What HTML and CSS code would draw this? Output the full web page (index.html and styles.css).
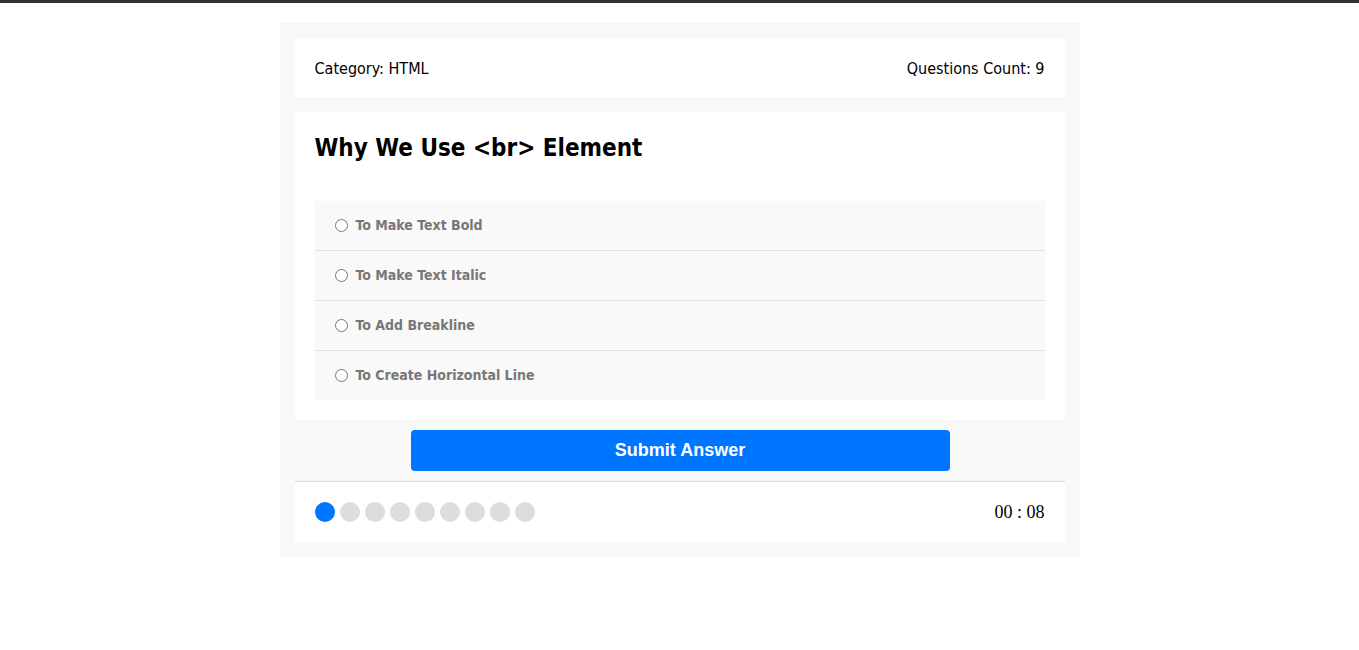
FILE: index.html
```html
<!DOCTYPE html>
<html>
<head>
<meta charset="utf-8">
<title>Quiz App</title>
<link rel="stylesheet" href="styles.css">
</head>
<body>
<div class="topbar"></div>
<div class="quiz-app">
  <div class="quiz-info">
    <div class="category">Category: <span>HTML</span></div>
    <div class="count">Questions Count: <span>9</span></div>
  </div>
  <div class="quiz-area">
    <h2>Why We Use &lt;br&gt; Element</h2>
    <div class="answers-area">
      <div class="answer"><input type="radio" name="q" id="a1"><label for="a1">To Make Text Bold</label></div>
      <div class="answer"><input type="radio" name="q" id="a2"><label for="a2">To Make Text Italic</label></div>
      <div class="answer"><input type="radio" name="q" id="a3"><label for="a3">To Add Breakline</label></div>
      <div class="answer"><input type="radio" name="q" id="a4"><label for="a4">To Create Horizontal Line</label></div>
    </div>
  </div>
  <div class="submit-area">
    <button class="submit-button">Submit Answer</button>
  </div>
  <div class="bullets">
    <div class="spans">
      <span class="on"></span><span></span><span></span><span></span><span></span><span></span><span></span><span></span><span></span>
    </div>
    <div class="countdown">00 : 08</div>
  </div>
</div>
</body>
</html>
```
FILE: styles.css
```css
* { box-sizing: border-box; }
body {
  margin: 0;
  font-family: Tahoma, "DejaVu Sans Condensed", "DejaVu Sans", sans-serif;
  background: #fff;
}
.topbar {
  height: 3px;
  background: #333;
}
.quiz-app {
  width: 800px;
  margin: 20px auto;
  background: #f8f8f8;
  padding: 15px;
}
.quiz-info {
  display: flex;
  justify-content: space-between;
  background: #fff;
  padding: 20px;
  font-size: 16px;
  line-height: 19px;
}
.quiz-info > div {
  padding-top: 1px;
  margin-bottom: -1px;
}
.quiz-area {
  background: #fff;
  padding: 20px;
  margin-top: 15px;
}
.quiz-area h2 {
  margin: 2px 0 38px;
  font-size: 24px;
  line-height: 29px;
  font-weight: bold;
}
.answer {
  display: flex;
  align-items: center;
  background: #f9f9f9;
  padding: 15px 20px;
  border-bottom: 1px solid #dfdfdf;
  height: 50px;
}
.answer:last-child {
  border-bottom: none;
  height: 49px;
}
.answer input {
  margin: 0 8px 0 0;
  width: 13px;
  height: 13px;
}
.answer label {
  font-size: 14px;
  font-weight: bold;
  color: #777;
  position: relative;
  top: -1px;
}
.submit-area {
  padding: 10px 0;
  border-bottom: 1px solid #ddd;
  display: flex;
  justify-content: center;
}
.submit-button {
  width: 539px;
  height: 41px;
  margin-left: 1px;
  background: #0075ff;
  color: #fff;
  border: none;
  border-radius: 4px;
  font-family: "Liberation Sans", Arial, sans-serif;
  font-weight: bold;
  font-size: 18px;
}
.bullets {
  display: flex;
  justify-content: space-between;
  align-items: center;
  background: #fff;
  padding: 20px;
}
.spans {
  display: flex;
  gap: 5px;
}
.spans span {
  width: 20px;
  height: 20px;
  border-radius: 50%;
  background: #ddd;
}
.spans span.on {
  background: #0075ff;
}
.countdown {
  font-family: "Liberation Serif", "Times New Roman", serif;
  font-size: 18px;
  line-height: 20px;
}
```
